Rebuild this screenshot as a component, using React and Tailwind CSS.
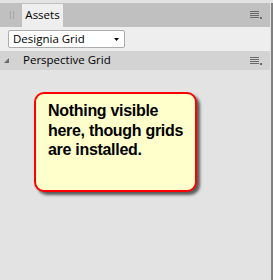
import React from 'react';

const ui = { fontFamily: '"Open Sans", "Noto Sans", sans-serif' };

function PanelMenu() {
  // little stacked-lines menu button with a tiny dropdown dot
  return (
    <svg width="14" height="10" viewBox="0 0 14 10">
      <rect x="0" y="0" width="9" height="1" fill="#6a6a6a" />
      <rect x="0" y="2" width="9" height="1" fill="#6a6a6a" />
      <rect x="0" y="4" width="9" height="1" fill="#6a6a6a" />
      <rect x="0" y="6" width="9" height="1" fill="#6a6a6a" />
      <rect x="10" y="6" width="2" height="2" fill="#6a6a6a" />
    </svg>
  );
}

export default function App() {
  return (
    <div className="w-[273px] h-[280px] bg-[#e3e3e3] flex flex-col overflow-hidden" style={ui}>
      <div className="h-[3px] shrink-0" />
      <div className="flex flex-1">
        <div className="w-[270px] flex flex-col">
          {/* Tab bar */}
          <div className="h-[24px] bg-[#c0c0c0] flex items-end relative">
            <div className="w-[22px] h-full flex items-center pl-[10px] gap-[2px]">
              <div className="w-px h-[8px] bg-[#a6a6a6]" />
              <div className="w-px h-[8px] bg-[#a6a6a6]" />
            </div>
            <div className="w-[41px] h-[23px] bg-[#eeeeee] flex items-center justify-center text-[11.5px] text-black pb-[2px]">
              Assets
            </div>
            <div className="absolute right-[6px] top-[8px]">
              <PanelMenu />
            </div>
          </div>

          {/* Dropdown row */}
          <div className="h-[24px] bg-[#eeeeee] flex items-center pl-[8px]">
            <div className="w-[117px] h-[18px] bg-white border border-[#acacac] rounded-[2px] flex items-center justify-between pl-[4px] pr-[5px] text-[11.5px] text-black">
              <span className="pb-[1px]">Designia Grid</span>
              <svg width="5" height="3" viewBox="0 0 5 3">
                <path d="M0 0 H5 L2.5 3 Z" fill="#000" />
              </svg>
            </div>
          </div>

          {/* Section header */}
          <div className="h-[19px] bg-[#d3d3d3] flex items-center relative text-[11.5px] text-black">
            <svg className="ml-[4px]" width="5" height="5" viewBox="0 0 5 5">
              <path d="M5 0 V5 H0 Z" fill="#6b6b6b" />
            </svg>
            <span className="ml-[14px] pb-[1px]">Perspective Grid</span>
            <div className="absolute right-[6px] top-[6px]">
              <PanelMenu />
            </div>
          </div>

          {/* Body */}
          <div className="flex-1 pt-[22px] pl-[34px]">
            <div
              className="w-[163px] h-[100px] bg-[#ffffcc] border-2 border-[#ff0000] rounded-[10px] shadow-[3px_3px_3px_rgba(0,0,0,0.6)] pl-[12px] pt-[7px] text-[16px] leading-[19.5px] tracking-[-0.3px] font-bold text-black"
              style={{ fontFamily: '"Liberation Sans", Arial, sans-serif' }}
            >
              Nothing visible here, though grids are installed.
            </div>
          </div>
        </div>
        <div className="w-px" />
        <div className="w-[2px] bg-[#808080]" />
      </div>
    </div>
  );
}
